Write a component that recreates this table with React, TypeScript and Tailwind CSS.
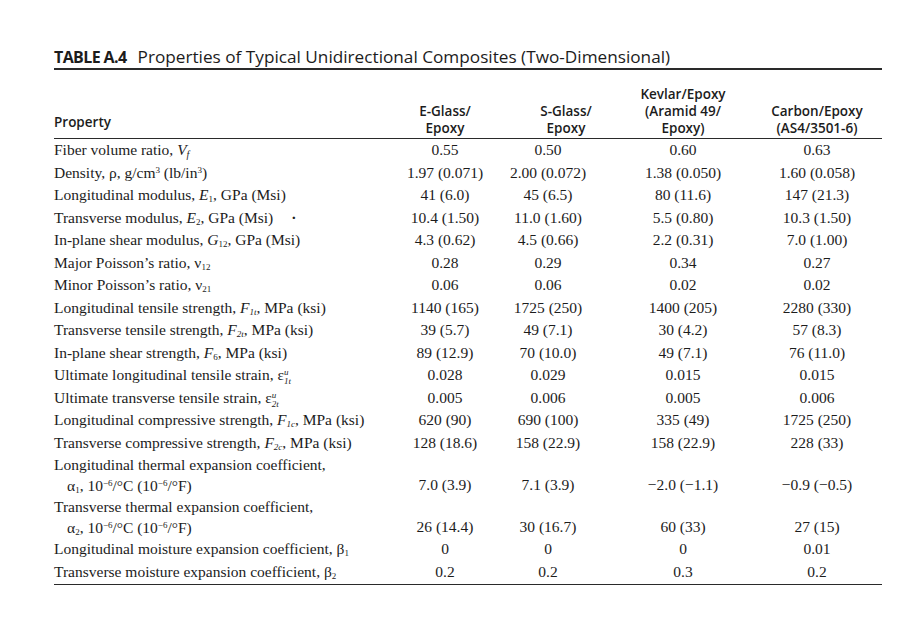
import type { ReactNode } from "react";

const serif = { fontFamily: '"Liberation Serif", "Times New Roman", serif' };
const sans = { fontFamily: '"Open Sans", "Noto Sans", sans-serif' };

type Row = {
  label: ReactNode;
  second?: ReactNode;
  values: string[];
};

function I({ children }: { children: ReactNode }) {
  return <span className="italic">{children}</span>;
}

// stacked superscript u over subscript for ultimate strains
function Strain({ sub }: { sub: string }) {
  return (
    <>
      ε
      <span className="inline-flex h-[18px] flex-col align-[5px] text-[9px] leading-[9px] italic">
        <span>u</span>
        <span>{sub}</span>
      </span>
    </>
  );
}

const rows: Row[] = [
  {
    label: (
      <>
        Fiber volume ratio, <I>V</I>
        <sub className="italic text-[10px]">f</sub>
      </>
    ),
    values: ["0.55", "0.50", "0.60", "0.63"],
  },
  {
    label: (
      <>
        Density, ρ, g/cm<sup className="text-[9px]">3</sup> (lb/in<sup className="text-[9px]">3</sup>)
      </>
    ),
    values: ["1.97 (0.071)", "2.00 (0.072)", "1.38 (0.050)", "1.60 (0.058)"],
  },
  {
    label: (
      <>
        Longitudinal modulus, <I>E</I>
        <sub className="text-[9px]">1</sub>, GPa (Msi)
      </>
    ),
    values: ["41 (6.0)", "45 (6.5)", "80 (11.6)", "147 (21.3)"],
  },
  {
    label: (
      <>
        Transverse modulus, <I>E</I>
        <sub className="text-[9px]">2</sub>, GPa (Msi)
        <span className="ml-[18px] font-bold">·</span>
      </>
    ),
    values: ["10.4 (1.50)", "11.0 (1.60)", "5.5 (0.80)", "10.3 (1.50)"],
  },
  {
    label: (
      <>
        In-plane shear modulus, <I>G</I>
        <sub className="text-[9px]">12</sub>, GPa (Msi)
      </>
    ),
    values: ["4.3 (0.62)", "4.5 (0.66)", "2.2 (0.31)", "7.0 (1.00)"],
  },
  {
    label: (
      <>
        Major Poisson’s ratio, ν<sub className="text-[9px]">12</sub>
      </>
    ),
    values: ["0.28", "0.29", "0.34", "0.27"],
  },
  {
    label: (
      <>
        Minor Poisson’s ratio, ν<sub className="text-[9px]">21</sub>
      </>
    ),
    values: ["0.06", "0.06", "0.02", "0.02"],
  },
  {
    label: (
      <>
        Longitudinal tensile strength, <I>F</I>
        <sub className="italic text-[9px]">1t</sub>, MPa (ksi)
      </>
    ),
    values: ["1140 (165)", "1725 (250)", "1400 (205)", "2280 (330)"],
  },
  {
    label: (
      <>
        Transverse tensile strength, <I>F</I>
        <sub className="italic text-[9px]">2t</sub>, MPa (ksi)
      </>
    ),
    values: ["39 (5.7)", "49 (7.1)", "30 (4.2)", "57 (8.3)"],
  },
  {
    label: (
      <>
        In-plane shear strength, <I>F</I>
        <sub className="text-[9px]">6</sub>, MPa (ksi)
      </>
    ),
    values: ["89 (12.9)", "70 (10.0)", "49 (7.1)", "76 (11.0)"],
  },
  {
    label: (
      <>
        Ultimate longitudinal tensile strain, <Strain sub="1t" />
      </>
    ),
    values: ["0.028", "0.029", "0.015", "0.015"],
  },
  {
    label: (
      <>
        Ultimate transverse tensile strain, <Strain sub="2t" />
      </>
    ),
    values: ["0.005", "0.006", "0.005", "0.006"],
  },
  {
    label: (
      <>
        Longitudinal compressive strength, <I>F</I>
        <sub className="italic text-[9px]">1c</sub>, MPa (ksi)
      </>
    ),
    values: ["620 (90)", "690 (100)", "335 (49)", "1725 (250)"],
  },
  {
    label: (
      <>
        Transverse compressive strength, <I>F</I>
        <sub className="italic text-[9px]">2c</sub>, MPa (ksi)
      </>
    ),
    values: ["128 (18.6)", "158 (22.9)", "158 (22.9)", "228 (33)"],
  },
  {
    label: <>Longitudinal thermal expansion coefficient,</>,
    second: (
      <>
        α<sub className="text-[9px]">1</sub>, 10<sup className="text-[9px]">−6</sup>/°C (10
        <sup className="text-[9px]">−6</sup>/°F)
      </>
    ),
    values: ["7.0 (3.9)", "7.1 (3.9)", "−2.0 (−1.1)", "−0.9 (−0.5)"],
  },
  {
    label: <>Transverse thermal expansion coefficient,</>,
    second: (
      <>
        α<sub className="text-[9px]">2</sub>, 10<sup className="text-[9px]">−6</sup>/°C (10
        <sup className="text-[9px]">−6</sup>/°F)
      </>
    ),
    values: ["26 (14.4)", "30 (16.7)", "60 (33)", "27 (15)"],
  },
  {
    label: (
      <>
        Longitudinal moisture expansion coefficient, β<sub className="text-[9px]">1</sub>
      </>
    ),
    values: ["0", "0", "0", "0.01"],
  },
  {
    label: (
      <>
        Transverse moisture expansion coefficient, β<sub className="text-[9px]">2</sub>
      </>
    ),
    values: ["0.2", "0.2", "0.3", "0.2"],
  },
];

const cols = "grid grid-cols-[336px_110px_96px_174px_94px_1fr]";

export default function App() {
  return (
    <div className="min-h-screen w-full bg-white text-[#1c1c1c]">
      <div className="ml-[54px] w-[828px] pt-[46px]">
        <div className="border-b-2 border-[#2a2a2a] text-[17.2px] leading-[21px]" style={sans}>
          <span className="text-[16px] font-bold tracking-[-0.6px]">TABLE A.4</span>
          <span className="ml-[11px]">Properties of Typical Unidirectional Composites (Two-Dimensional)</span>
        </div>

        <div
          className={`${cols} items-end border-b-[1.5px] border-[#2a2a2a] pt-[16px] pb-[1px] text-[13.5px] font-semibold leading-[17px]`}
          style={sans}
        >
          <div className="pb-[6px]">Property</div>
          <div className="text-center">
            E-Glass/
            <br />
            Epoxy
          </div>
          <div className="pl-[36px] text-center">
            S-Glass/
            <br />
            Epoxy
          </div>
          <div className="text-center">
            Kevlar/Epoxy
            <br />
            (Aramid 49/
            <br />
            Epoxy)
          </div>
          <div className="text-center">
            Carbon/Epoxy
            <br />
            (AS4/3501-6)
          </div>
          <div />
        </div>

        <div className={`${cols} border-b-[1.5px] border-[#2a2a2a] pb-[1px] text-[15.5px]`} style={serif}>
          {rows.map((row, i) => (
            <div key={i} className="contents">
              <div className="whitespace-nowrap leading-[22.5px]">
                <div>{row.label}</div>
                {row.second && <div className="pb-[1.5px] pl-[13px] leading-[18px]">{row.second}</div>}
              </div>
              {row.values.map((v, j) => (
                <div key={j} className="self-end whitespace-nowrap text-center leading-[22.5px]">
                  {v}
                </div>
              ))}
              <div />
            </div>
          ))}
        </div>
      </div>
    </div>
  );
}
